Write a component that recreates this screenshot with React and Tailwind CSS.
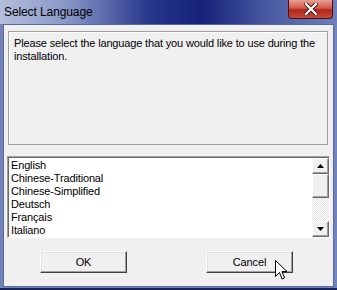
import React from "react";

const languages = ["English", "Chinese-Traditional", "Chinese-Simplified", "Deutsch", "Français", "Italiano"];

function Arrow({ up }) {
  return (
    <svg width="7" height="4" viewBox="0 0 7 4">
      {up ? <path d="M3.5 0 L7 4 L0 4 Z" fill="#000" /> : <path d="M0 0 L7 0 L3.5 4 Z" fill="#000" />}
    </svg>
  );
}

function ScrollButton({ up }) {
  return (
    <div className="h-[16px] w-full flex items-center justify-center bg-[#f0f0f0] border border-t-white border-l-white border-r-[#696969] border-b-[#696969] shadow-[inset_-1px_-1px_0_#a0a0a0]">
      <Arrow up={up} />
    </div>
  );
}

function Button({ children }) {
  return (
    <button className="w-[87px] h-[22px] bg-[#f0f0f0] border border-t-white border-l-white border-r-[#404040] border-b-[#404040] shadow-[inset_-1px_-1px_0_#a0a0a0,inset_1px_1px_0_#e3e3e3] text-[11px] text-black">
      {children}
    </button>
  );
}

export default function App() {
  return (
    <div
      className="relative w-[337px] h-[290px] flex flex-col bg-[#7283bb] border-b-[2px] border-[#1a2357] overflow-hidden"
      style={{ fontFamily: '"Liberation Sans", Arial, sans-serif' }}
    >
      {/* title bar */}
      <div className="h-[24px] flex items-start bg-[linear-gradient(90deg,#b4bfdc_0%,#8796c6_20%,#25358a_45%,#16227a_60%,#4a5ba3_80%,#6f80bb_100%)]">
        <div className="pl-[4px] pt-[5px] text-[12px] tracking-[-0.1px] text-black leading-[15px]">Select Language</div>
        <div className="ml-auto mr-[4px] w-[45px] h-[19px] rounded-b-[4px] border border-t-0 border-[#4b1010] bg-[linear-gradient(180deg,#e8a090_0%,#d0584a_45%,#b2261c_55%,#c84a3a_100%)] flex items-center justify-center">
          <svg width="14" height="12" viewBox="0 0 14 12">
            <path d="M2 1 L12 11 M12 1 L2 11" stroke="#3a1a1a" strokeWidth="4" strokeLinecap="square" />
            <path d="M2 1 L12 11 M12 1 L2 11" stroke="#fff" strokeWidth="2.2" strokeLinecap="square" />
          </svg>
        </div>
      </div>

      {/* body */}
      <div className="flex-1 mx-[3px] mb-[1px] bg-[#f0f0f0] border border-[#5a6a9e] flex flex-col px-[3px] text-[11px] tracking-[-0.15px]">
        <div className="mt-[6px] ml-[1px] mr-[2px] h-[114px] border border-[#a0a0a0] shadow-[inset_1px_1px_0_#fff] px-[5px] pt-[5px] leading-[13px] text-black">
          Please select the language that you would like to use during the installation.
        </div>

        <div className="mt-[11px] h-[82px] flex bg-white border border-t-[#a0a0a0] border-l-[#a0a0a0] border-r-white border-b-white shadow-[inset_1px_1px_0_#696969]">
          <div className="flex-1 pl-[3px] pt-[2px]">
            {languages.map((l) => (
              <div key={l} className="h-[13px] leading-[13px] text-black">{l}</div>
            ))}
          </div>
          <div className="w-[17px] flex flex-col pt-[1px]">
            <ScrollButton up />
            <div className="h-[24px] bg-[#f0f0f0] border border-t-white border-l-white border-r-[#696969] border-b-[#696969] shadow-[inset_-1px_-1px_0_#a0a0a0]" />
            <div className="flex-1 bg-[conic-gradient(#ffffff_25%,#e4e4e4_0_50%,#ffffff_0_75%,#e4e4e4_0)] bg-[length:2px_2px]" />
            <ScrollButton />
          </div>
        </div>

        <div className="mt-[13px] flex justify-between pl-[33px] pr-[37px]">
          <Button>OK</Button>
          <Button>Cancel</Button>
        </div>
      </div>

      {/* mouse cursor */}
      <svg className="absolute left-[275px] top-[260px]" width="13" height="21" viewBox="0 0 13 21">
        <path d="M0.5 0.5 L0.5 16.5 L4.5 12.5 L7 19 L9.5 18 L7 11.5 L12 11.5 Z" fill="#fff" stroke="#000" strokeWidth="1" strokeLinejoin="miter" />
      </svg>
    </div>
  );
}
